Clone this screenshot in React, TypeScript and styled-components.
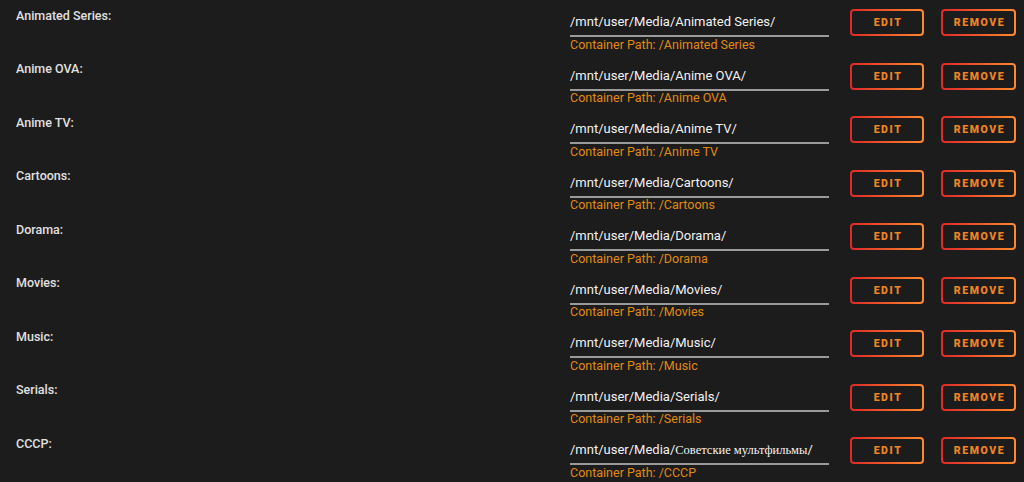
import { FunctionComponent } from "react";
import styled, { createGlobalStyle } from "styled-components";

const GlobalStyle = createGlobalStyle`
    html, body {
        margin: 0;
        padding: 0;
        background: #1c1c1c;
    }
    body {
        font-family: Roboto, "Open Sans", sans-serif;
        color: #e4e4e4;
    }
`;

interface PathMapping {
    name: string;
    host: string;
    ruHost?: string;
    container: string;
}

const mappings: PathMapping[] = [
    { name: "Animated Series", host: "/mnt/user/Media/Animated Series/", container: "/Animated Series" },
    { name: "Anime OVA", host: "/mnt/user/Media/Anime OVA/", container: "/Anime OVA" },
    { name: "Anime TV", host: "/mnt/user/Media/Anime TV/", container: "/Anime TV" },
    { name: "Cartoons", host: "/mnt/user/Media/Cartoons/", container: "/Cartoons" },
    { name: "Dorama", host: "/mnt/user/Media/Dorama/", container: "/Dorama" },
    { name: "Movies", host: "/mnt/user/Media/Movies/", container: "/Movies" },
    { name: "Music", host: "/mnt/user/Media/Music/", container: "/Music" },
    { name: "Serials", host: "/mnt/user/Media/Serials/", container: "/Serials" },
    { name: "CCCP", host: "/mnt/user/Media/", ruHost: "Советские мультфильмы", container: "/CCCP" },
];

const App: FunctionComponent = () => {

    return (
        <>
            <GlobalStyle />
            <List>
                {mappings.map(m => (
                    <Row key={m.name}>
                        <Label>{m.name}:</Label>
                        <Field>
                            <HostPath>
                                {m.host}
                                {m.ruHost && <><Cyrillic>{m.ruHost}</Cyrillic>/</>}
                            </HostPath>
                            <ContainerPath>Container Path: {m.container}</ContainerPath>
                        </Field>
                        <Actions>
                            <GradientButton $width={74}>Edit</GradientButton>
                            <GradientButton $width={75}>Remove</GradientButton>
                        </Actions>
                    </Row>
                ))}
            </List>
        </>
    );
}

export default App;

const List = styled.div`
    display: flex;
    flex-direction: column;
`;

const Row = styled.div`
    display: grid;
    grid-template-columns: 1fr 259px auto;
    height: 53.5px;
    box-sizing: border-box;
    padding-left: 16px;
    padding-right: 8px;
`;

const Label = styled.div`
    font-size: 12.5px;
    font-weight: 500;
    line-height: 16px;
    padding-top: 7.5px;
    color: #e0e0e0;
`;

const Field = styled.div`
    display: flex;
    flex-direction: column;
    padding-top: 13px;
`;

const HostPath = styled.div`
    font-size: 13px;
    font-weight: normal;
    line-height: 18px;
    color: #f2f2f2;
    padding-bottom: 4px;
    border-bottom: 2px solid #9a9a9a;
    white-space: nowrap;
`;

const Cyrillic = styled.span`
    font-family: "Liberation Serif", serif;
    font-size: 12.5px;
`;

const ContainerPath = styled.div`
    font-size: 12.5px;
    line-height: 14px;
    color: #e08a12;
    padding-top: 0.5px;
`;

const Actions = styled.div`
    display: flex;
    flex-direction: row;
    gap: 17px;
    padding-left: 21px;
    padding-top: 9px;
    align-items: flex-start;
`;

const GradientButton = styled.button<{ $width: number }>`
    width: ${p => p.$width}px;
    height: 27px;
    box-sizing: border-box;
    border: 2px solid transparent;
    border-radius: 4px;
    background:
        linear-gradient(#1c1c1c, #1c1c1c) padding-box,
        linear-gradient(90deg, #e02828, #ff8a2e) border-box;
    color: #ee8424;
    font-family: Roboto, sans-serif;
    font-size: 10.5px;
    font-weight: 900;
    letter-spacing: 1.6px;
    text-transform: uppercase;
    padding: 0 0 0 2px;
    cursor: pointer;
`;
